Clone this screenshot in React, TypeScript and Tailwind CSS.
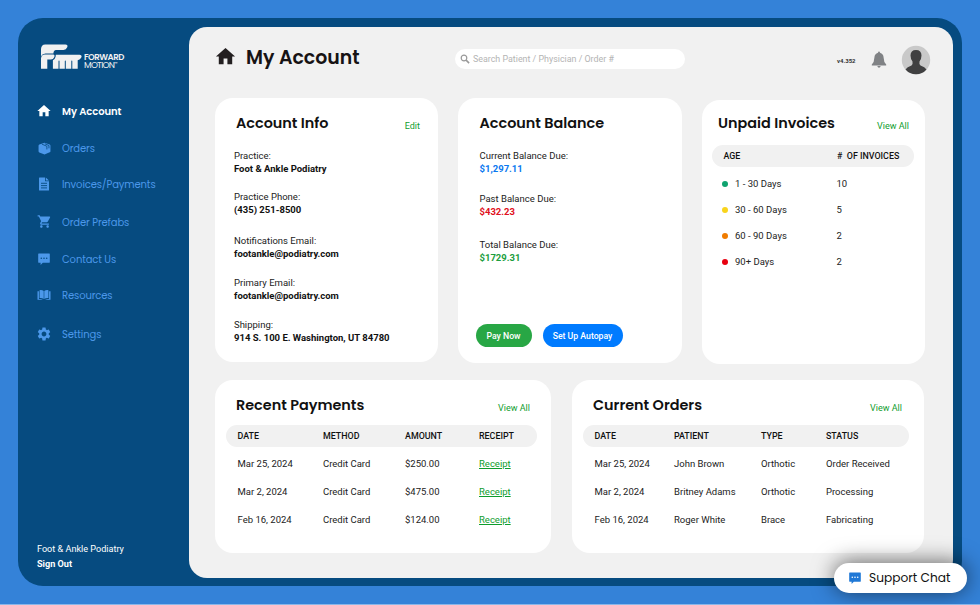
import type { ReactNode } from "react";
import { clsx } from "clsx";
import { MdHome, MdSettings, MdShoppingCart } from "react-icons/md";

const HEADING = "font-['Poppins','Inter',sans-serif]";

function BoxIcon() {
    return (
        <svg viewBox="0 0 14 14" className="h-[13px] w-[13px]" fill="currentColor">
            <path d="M7 .8 12.6 2.8Q13.4 3.1 13.4 4v6q0 .8-.8 1.1L7.6 13.3q-.6.3-1.2 0L1.4 11.200Q.6 10.900.6 10V4q0-.9.8-1.200Z" />
            <path d="M4.2 2.300 9.600 4.600v3.400M7.400 1.900l4.400 1.900v3" fill="none" stroke="#064b80" strokeWidth=".9" />
        </svg>
    );
}

function FileIcon() {
    return (
        <svg viewBox="0 0 12 14" className="h-[14px] w-[12px]" fill="currentColor">
            <path d="M1.500.5H7v3.800h4V13q0 .5-.5.5h-9Q1 13.500 1 13V1Q1 .5 1.500.5Z" />
            <path d="M7.800.5 11 3.600H7.800Z" />
            <path d="M3 6.300h6M3 8.600h6M3 10.900h6" stroke="#064b80" strokeWidth=".9" />
        </svg>
    );
}

function ChatIcon({ dots = "#064b80" }: { dots?: string }) {
    return (
        <svg viewBox="0 0 12 12" className="h-[12px] w-[12px]" fill="currentColor">
            <path d="M.6.500h10.800q.4 0 .4.400v8.400q0 .4-.4.400H4.800L2.600 12V9.700H.6q-.4 0-.4-.4V.9Q.2.500.6.500Z" />
            <g fill={dots}>
                <circle cx="3.300" cy="5.200" r=".8" />
                <circle cx="6" cy="5.200" r=".8" />
                <circle cx="8.700" cy="5.200" r=".8" />
            </g>
        </svg>
    );
}

function BookIcon() {
    return (
        <svg viewBox="0 0 14 12" className="h-[12px] w-[14px]" fill="currentColor">
            <path d="M2.600 1.200Q5 .8 6.700 2V9.900Q5 8.800 2.600 9.100ZM11.400 1.200Q9 .8 7.300 2V9.900Q9 8.800 11.400 9.100Z" />
            <path d="M1.900 2.200H.5v8.500h5.400Q4.400 9.700 1.900 10ZM12.100 2.200h1.400v8.500H8.100Q9.600 9.700 12.100 10Z" />
        </svg>
    );
}

function Logo() {
    return (
        <div className="flex h-[26px] text-[#f1f1f1]">
            <svg viewBox="0 0 42 26" className="h-[26px] w-[42px]" fill="currentColor">
                <path d="M5.200.4H25.400Q28.300.6 27.200 3.200 26.200 5.800 23.500 6H16Q13.600 6.200 13.400 9.600H5.500Q2.400 9.800 1 12.200V5Q1.200.6 5.200.4Z" />
                <path d="M1 24.800V14.200Q1.300 10.600 5 10.400H13.200Q15.200 10.600 14.200 13.200 13.200 15.400 11 15.600H7.300V24.800Z" />
                <path d="M12.900 24.800V16.200Q15 15.300 15.600 12.800L15.800 10.800H39.600Q42.400 11 41.300 13.600 40.300 16 37.700 16.200V24.800H32.300V17.200Q32.300 16.500 31.800 16.500T31.300 17.200V24.800H25.800V17.200Q25.800 16.500 25.300 16.500T24.800 17.200V24.800H19.500V17.200Q19.500 16.500 19 16.500T18.500 17.200V24.800Z" />
            </svg>
            <div className={clsx("mt-[8px] ml-[2px] flex flex-col", HEADING)}>
                <div className="h-[9px] text-[8.600px] leading-[10px] font-semibold tracking-[-0.5px]">FORWARD</div>
                <div className="flex h-[9px] text-[8.900px] leading-[9px] tracking-[-0.75px]">
                    MOTION<span className="text-[4px] leading-[6px] tracking-normal">™</span>
                </div>
            </div>
        </div>
    );
}

const navItems = [
    { label: "My Account", icon: <MdHome size={16} />, gap: "mt-0" },
    { label: "Orders", icon: <BoxIcon />, gap: "mt-[17px]" },
    { label: "Invoices/Payments", icon: <FileIcon />, gap: "mt-[16px]" },
    { label: "Order Prefabs", icon: <MdShoppingCart size={15} className="-mt-[2px]" />, gap: "mt-[18px]" },
    { label: "Contact Us", icon: <ChatIcon />, gap: "mt-[17px]" },
    { label: "Resources", icon: <BookIcon />, gap: "mt-[16px]" },
    { label: "Settings", icon: <MdSettings size={16} />, gap: "mt-[19px]" },
];

function Sidebar() {
    return (
        <aside className="flex w-[171px] shrink-0 flex-col pt-[26px] pb-[14px] pl-[18px]">
            <div className="pl-[4px]">
                <Logo />
            </div>
            <nav className="mt-[31px] flex flex-col">
                {navItems.map((item, i) => (
                    <a
                        key={item.label}
                        className={clsx(
                            "flex h-[20px] items-center text-[10px]",
                            HEADING,
                            item.gap,
                            i === 0 ? "font-semibold tracking-[-0.08px] text-white" : "tracking-[-0.12px] text-[#4c98ea]"
                        )}
                    >
                        <span className="mr-[10px] flex w-[16px] justify-center">{item.icon}</span>
                        <span>{item.label}</span>
                    </a>
                ))}
            </nav>
            <div className="mt-auto pl-px text-[9.100px] leading-[15px] text-white">
                <div>Foot &amp; Ankle Podiatry</div>
                <div className="font-bold">Sign Out</div>
            </div>
        </aside>
    );
}

function Header() {
    return (
        <header className="flex h-[71px] pl-[25px]">
            <MdHome className="mt-[18px] text-[#231f20]" size={23} />
            <h1 className={clsx("mt-[17px] ml-[9px] w-[209px] text-[18.900px] leading-[28px] font-semibold text-[#171314]", HEADING)}>
                My Account
            </h1>
            <div className="mt-[22px] flex h-[20px] w-[230px] items-center rounded-full bg-white pl-[5px] text-[8.900px] text-[#b4b4b4]">
                <svg viewBox="0 0 10 10" className="mr-[3px] h-[10px] w-[10px]" fill="none" stroke="#999" strokeWidth="1.200">
                    <circle cx="4" cy="4" r="2.800" />
                    <path d="m6.100 6.100 3 3" strokeWidth="1.500" />
                </svg>
                <span className="pt-px">Search Patient / Physician / Order #</span>
            </div>
            <span className="mt-[30px] ml-[152px] w-[34px] text-[6px] leading-[8px] font-bold text-[#333]">v4.352</span>
            <svg viewBox="0 0 16 18" className="mt-[24px] h-[18px] w-[16px]" fill="#808285">
                <path d="M8 .6q.9 0 1 1.200 3.400.9 3.600 4.800.1 4.700 2.600 6.900V14.400H.8v-.9Q3.300 11.300 3.400 6.600 3.600 2.700 7 1.800 7.100.6 8 .6ZM6.300 15.100h3.400Q9.300 16.700 8 16.700T6.300 15.100Z" />
            </svg>
            <svg viewBox="0 0 30 30" className="mt-[18px] ml-[13.500px] h-[30px] w-[30px]">
                <circle cx="15" cy="15" r="14.200" fill="#c9c9c9" />
                <path
                    d="M15 5q5.500 0 5.500 5.600 0 3.400-2 5.900-.6 3 1 4 4.500 1.500 6 3.900Q21.500 29.200 15 29.200T4.500 24.400q1.500-2.400 6-3.900 1.600-1 1-4-2-2.500-2-5.900Q9.500 5 15 5Z"
                    fill="#404041"
                />
            </svg>
        </header>
    );
}

function Card({ title, link, className, children }: {
    title: string;
    link?: string;
    className: string;
    children: ReactNode;
}) {
    return (
        <section className={clsx("flex shrink-0 flex-col rounded-[18px] bg-white", className)}>
            <div className="flex h-[22px] items-start justify-between">
                <h2 className={clsx("text-[14.400px] leading-[23px] font-semibold text-[#111]", HEADING)}>{title}</h2>
                {link && <a className="mt-[8px] text-[9px] leading-[12px] text-[#0f9d2e]">{link}</a>}
            </div>
            {children}
        </section>
    );
}

const accountFields = [
    { label: "Practice:", value: "Foot & Ankle Podiatry", gap: "mt-[15px]" },
    { label: "Practice Phone:", value: "(435) 251-8500", gap: "mt-[15px]" },
    { label: "Notifications Email:", value: "footankle@podiatry.com", gap: "mt-[18px]" },
    { label: "Primary Email:", value: "footankle@podiatry.com", gap: "mt-[16px]" },
    { label: "Shipping:", value: "914 S. 100 E. Washington, UT 84780", gap: "mt-[16px]" },
];

const balances = [
    { label: "Current Balance Due:", value: "$1,297.11", gap: "mt-[15px]", color: "text-[#0a78f0]" },
    { label: "Past Balance Due:", value: "$432.23", gap: "mt-[17px]", color: "text-[#e01020]" },
    { label: "Total Balance Due:", value: "$1729.31", gap: "mt-[20px]", color: "text-[#1b9e3e]" },
];

const invoices = [
    { age: "1 - 30 Days", count: 10, dot: "bg-[#0fa36f]" },
    { age: "30 - 60 Days", count: 5, dot: "bg-[#f9d41c]" },
    { age: "60 - 90 Days", count: 2, dot: "bg-[#f07c00]" },
    { age: "90+ Days", count: 2, dot: "bg-[#e80010]" },
];

const payments = [
    ["Mar 25, 2024", "Credit Card", "$250.00"],
    ["Mar 2, 2024", "Credit Card", "$475.00"],
    ["Feb 16, 2024", "Credit Card", "$124.00"],
];

const orders = [
    ["Mar 25, 2024", "John Brown", "Orthotic", "Order Received"],
    ["Mar 2, 2024", "Britney Adams", "Orthotic", "Processing"],
    ["Feb 16, 2024", "Roger White", "Brace", "Fabricating"],
];

function Field({ label, value, gap, color }: { label: string; value: string; gap: string; color?: string }) {
    return (
        <div className={clsx("leading-[13px]", gap)}>
            <div>{label}</div>
            <div className={clsx("font-bold", color ?? "text-[#111]")}>{value}</div>
        </div>
    );
}

function TableHead({ columns, className }: { columns: string[]; className: string }) {
    return (
        <div className={clsx("grid h-[22px] items-center rounded-full bg-[#f1f1f1] pt-[2px] pl-[11.500px] text-[8.900px] font-medium text-[#111]", className)}>
            {columns.map((c) => (
                <span key={c} className="whitespace-pre">{c}</span>
            ))}
        </div>
    );
}

export default function App() {
    return (
        <div className="relative h-[605px] w-[980px] overflow-hidden border-b border-[#8ab6e8] bg-[#3482d8] p-[18px] font-['Roboto',sans-serif] text-[9.500px] text-[#222]">
            <div className="flex h-[568px] w-[944px] rounded-[25px] bg-[#064b80] py-[9px] pr-[9px]">
                <div className="-my-[9px] flex">
                    <Sidebar />
                </div>
                <main className="h-[551px] w-[764px] rounded-[18px] bg-[#f1f1f1]">
                    <Header />
                    <div className="flex h-[282px] pl-[26px]">
                        <Card title="Account Info" link="Edit" className="h-[264px] w-[223px] pt-[14px] pr-[18px] pl-[21px]">
                            <div className="-ml-[2px]">
                                {accountFields.map((f) => (
                                    <Field key={f.label} {...f} />
                                ))}
                            </div>
                        </Card>
                        <Card title="Account Balance" className="ml-[20px] h-[265px] w-[224px] pt-[14px] pl-[21.500px]">
                            {balances.map((b) => (
                                <Field key={b.label} {...b} />
                            ))}
                            <div className="mt-auto mb-[16px] -ml-[4px] flex gap-[11px] text-[8.700px] font-medium text-white">
                                <button className="h-[23px] w-[56px] rounded-full bg-[#28a745] pt-[2px]">Pay Now</button>
                                <button className="h-[23px] w-[80px] rounded-full bg-[#007bff] pt-[2px]">Set Up Autopay</button>
                            </div>
                        </Card>
                        <Card title="Unpaid Invoices" link="View All" className="mt-[2px] ml-[19.500px] h-[264px] w-[223.500px] pt-[12px] pr-[16px] pl-[16.500px]">
                            <TableHead columns={["AGE", "#  OF INVOICES"]} className="mt-[11px] -ml-[6px] w-[202px] grid-cols-[113.500px_1fr]" />
                            <div className="mt-[4px] pl-[3.500px]">
                                {invoices.map((row) => (
                                    <div key={row.age} className="flex h-[26px] items-center">
                                        <span className={clsx("mr-[7.500px] h-[6px] w-[6px] rounded-full", row.dot)} />
                                        <span className="w-[101.500px]">{row.age}</span>
                                        <span>{row.count}</span>
                                    </div>
                                ))}
                            </div>
                        </Card>
                    </div>
                    <div className="flex pl-[26px]">
                        <Card title="Recent Payments" link="View All" className="h-[173px] w-[336px] pt-[14px] pr-[21px] pl-[21px]">
                            <TableHead
                                columns={["DATE", "METHOD", "AMOUNT", "RECEIPT"]}
                                className="mt-[9px] -ml-[10px] w-[311px] grid-cols-[85.500px_82px_74px_1fr]"
                            />
                            <div className="mt-[3px] pl-[1.500px]">
                                {payments.map((row) => (
                                    <div key={row[0]} className="grid h-[28px] grid-cols-[85.500px_82px_74px_1fr] items-center">
                                        {row.map((cell) => (
                                            <span key={cell}>{cell}</span>
                                        ))}
                                        <a className="text-[#0f9d2e] underline">Receipt</a>
                                    </div>
                                ))}
                            </div>
                        </Card>
                        <Card title="Current Orders" link="View All" className="ml-[21px] h-[173px] w-[352px] pt-[14px] pr-[22px] pl-[21px]">
                            <TableHead
                                columns={["DATE", "PATIENT", "TYPE", "STATUS"]}
                                className="mt-[9px] -ml-[10px] w-[326px] grid-cols-[79.500px_87px_65px_1fr]"
                            />
                            <div className="mt-[3px] pl-[1.500px]">
                                {orders.map((row) => (
                                    <div key={row[0]} className="grid h-[28px] grid-cols-[79.500px_87px_65px_1fr] items-center">
                                        {row.map((cell) => (
                                            <span key={cell}>{cell}</span>
                                        ))}
                                    </div>
                                ))}
                            </div>
                        </Card>
                    </div>
                </main>
            </div>
            <button
                className={clsx(
                    "absolute right-[13px] bottom-[11px] flex h-[30px] w-[133px] items-center rounded-full bg-white pl-[15px] text-[12.200px] text-[#111] shadow-[0_-1px_22px_rgba(0,0,0,0.6)]",
                    HEADING
                )}
            >
                <span className="mr-[8px] text-[#1f78d6]">
                    <ChatIcon dots="#fff" />
                </span>
                <span className="pt-px">Support Chat</span>
            </button>
        </div>
    );
}
